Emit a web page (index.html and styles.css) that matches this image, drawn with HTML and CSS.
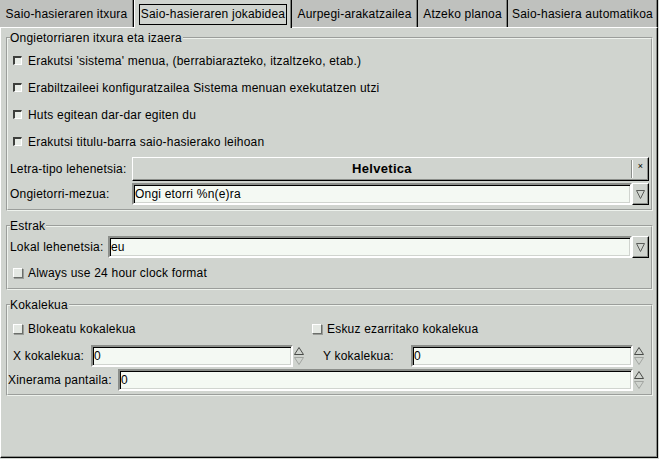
FILE: index.html
```html
<!DOCTYPE html>
<html lang="eu">
<head>
<meta charset="utf-8">
<title>Saio-hasiera</title>
<link rel="stylesheet" href="styles.css">
</head>
<body>
<div class="window">
  <div class="tabs">
    <div class="tab t1">Saio-hasieraren itxura</div>
    <div class="tab t2 active"><span class="focus">Saio-hasieraren jokabidea</span></div>
    <div class="tab t3">Aurpegi-arakatzailea</div>
    <div class="tab t4">Atzeko planoa</div>
    <div class="tab t5">Saio-hasiera automatikoa</div>
  </div>
  <div class="page">
    <fieldset class="frame f1">
      <legend>Ongietorriaren itxura eta izaera</legend>
      <div class="check"><span class="box sunk"></span>Erakutsi 'sistema' menua, (berrabiarazteko, itzaltzeko, etab.)</div>
      <div class="check"><span class="box sunk"></span>Erabiltzaileei konfiguratzailea Sistema menuan exekutatzen utzi</div>
      <div class="check"><span class="box sunk"></span>Huts egitean dar-dar egiten du</div>
      <div class="check"><span class="box sunk"></span>Erakutsi titulu-barra saio-hasierako leihoan</div>
      <div class="field font-field">
        <span class="lbl w-f1">Letra-tipo lehenetsia:</span>
        <div class="fontbtn"><span class="fname">Helvetica</span><span class="fsep"></span><span class="fx">×</span></div>
      </div>
      <div class="field combo-field">
        <span class="lbl w-f1">Ongietorri-mezua:</span>
        <div class="combo">
          <div class="entry">Ongi etorri %n(e)ra</div>
          <div class="drop"><svg width="11" height="11" viewBox="0 0 11 11"><path d="M1.5 1.5 H9.5 L5.5 9.5 Z" fill="none" stroke="#5a5c59" stroke-width="1"/></svg></div>
        </div>
      </div>
    </fieldset>

    <fieldset class="frame f2">
      <legend>Estrak</legend>
      <div class="field combo-field first">
        <span class="lbl w-f2">Lokal lehenetsia:</span>
        <div class="combo">
          <div class="entry">eu</div>
          <div class="drop"><svg width="11" height="11" viewBox="0 0 11 11"><path d="M1.5 1.5 H9.5 L5.5 9.5 Z" fill="none" stroke="#5a5c59" stroke-width="1"/></svg></div>
        </div>
      </div>
      <div class="check short"><span class="box raised"></span>Always use 24 hour clock format</div>
    </fieldset>

    <fieldset class="frame f3">
      <legend>Kokalekua</legend>
      <div class="check short pair">
        <span class="item left"><span class="box raised"></span>Blokeatu kokalekua</span>
        <span class="item"><span class="box raised"></span>Eskuz ezarritako kokalekua</span>
      </div>
      <div class="field spin-row">
        <span class="lbl w-x">X kokalekua:</span>
        <div class="entry w-xe">0</div>
        <span class="spin"><svg width="12" height="22" viewBox="0 0 12 22"><path d="M6 2.5 L10.5 9.5 H1.5 Z" fill="none" stroke="#4a4c49"/><path d="M1.5 12.5 H10.5 L6 19.5 Z" fill="none" stroke="#a2a5a1"/></svg></span>
        <span class="lbl w-y">Y kokalekua:</span>
        <div class="entry w-ye">0</div>
        <span class="spin"><svg width="12" height="22" viewBox="0 0 12 22"><path d="M6 2.5 L10.5 9.5 H1.5 Z" fill="none" stroke="#4a4c49"/><path d="M1.5 12.5 H10.5 L6 19.5 Z" fill="none" stroke="#a2a5a1"/></svg></span>
      </div>
      <div class="field spin-row xin">
        <span class="lbl w-xin">Xinerama pantaila:</span>
        <div class="entry w-xine">0</div>
        <span class="spin"><svg width="12" height="22" viewBox="0 0 12 22"><path d="M6 2.5 L10.5 9.5 H1.5 Z" fill="none" stroke="#4a4c49"/><path d="M1.5 12.5 H10.5 L6 19.5 Z" fill="none" stroke="#a2a5a1"/></svg></span>
      </div>
    </fieldset>
  </div>
</div>
</body>
</html>
```

FILE: styles.css
```css
* { box-sizing: border-box; }

html, body {
  margin: 0;
  padding: 0;
  background: #d0d4cf;
}

body {
  width: 659px;
  height: 459px;
  overflow: hidden;
  font-family: "Liberation Sans", Arial, sans-serif;
  font-size: 12px;
  line-height: 14px;
  letter-spacing: 0.2px;
  color: #000;
}

.window {
  width: 659px;
  height: 459px;
}

/* ---------- tabs ---------- */
.tabs {
  display: flex;
  height: 27px;
}

.tab {
  display: flex;
  align-items: center;
  justify-content: center;
  height: 27px;
  background: #bfc1be;
  border-right: 1px solid #000;
  box-shadow: inset -1px 0 0 #7d807c;
  white-space: nowrap;
}

.t1 { width: 134px; }
.t2 { width: 158px; }
.t3 { width: 126px; }
.t4 { width: 90px; }
.t5 { width: 150px; }

.tab.active {
  background: #d0d4cf;
  border-left: 1px solid #fff;
  height: 28px;
  position: relative;
  z-index: 1;
}

.focus {
  border: 1px solid #000;
  padding: 2px 1px 3px 1px;
}

/* ---------- page ---------- */
.page {
  width: 658px;
  height: 431px;
  border-top: 1px solid #fff;
  border-left: 1px solid #fff;
  border-right: 1px solid #000;
  border-bottom: 1px solid #000;
  box-shadow: inset -1px -1px 0 #8b8e8a;
  padding: 3px 4px 0 5px;
}

/* ---------- frames ---------- */
.frame {
  margin: 0;
  min-width: 0;
  border: 2px groove #eef2ed;
  padding: 2px 2px 4px 2px;
}

.frame legend {
  padding: 0 1px 0 0;
  margin: 0;
  line-height: 14px;
}

.f2 { margin-top: 8px; padding-top: 3px; padding-bottom: 2px; }
.f3 { margin-top: 8px; padding-top: 4px; padding-bottom: 3px; }

/* ---------- check rows ---------- */
.check {
  display: flex;
  align-items: center;
  height: 27px;
  padding-left: 3px;
  white-space: nowrap;
}

.check.short { height: 26px; margin-top: 2px; }
.f3 .check.short { margin-top: 0; }

.box {
  display: inline-block;
  flex: none;
  width: 9px;
  height: 9px;
  margin-right: 6px;
}

.box.sunk {
  background: #e9ede8;
  border-style: solid;
  border-width: 2px 1px 1px 2px;
  border-color: #3d3f3c #fff #fff #3d3f3c;
}

.box.raised {
  width: 10px;
  height: 10px;
  margin-right: 5px;
  background: #e4e8e3;
  border: 1px solid;
  border-color: #fff #6b6e6a #6b6e6a #fff;
  box-shadow: 1px 1px 0 #9a9d99;
}

.pair .item {
  display: flex;
  align-items: center;
}

.pair .item.left { width: 299px; }

/* ---------- fields ---------- */
.field {
  display: flex;
  align-items: center;
  margin-top: 2px;
}

.field.first { margin-top: 0; }

.lbl {
  flex: none;
  white-space: nowrap;
}

.w-f1 { width: 122px; }
.w-f2 { width: 98px; }
.w-x { width: 81px; padding-left: 3px; }
.w-y { width: 106px; padding-left: 18px; }
.w-xin { width: 110px; margin-left: -2px; }

.fontbtn {
  flex: 1;
  height: 24px;
  display: flex;
  align-items: center;
  background: #d0d4cf;
  border: 1px solid;
  border-color: #fff #000 #000 #fff;
  box-shadow: inset -1px -1px 0 #8b8e8a;
}

.fname {
  flex: 1;
  text-align: center;
  font-weight: bold;
  font-size: 13px;
  letter-spacing: 0.3px;
}

.fsep {
  width: 2px;
  height: 18px;
  border-left: 1px solid #8b8e8a;
  border-right: 1px solid #fff;
}

.fx {
  width: 15px;
  text-align: center;
  font-size: 9px;
  line-height: 9px;
  padding-bottom: 6px;
}

.combo {
  flex: 1;
  display: flex;
  height: 22px;
}

.entry {
  height: 22px;
  background: #f4f9f3;
  border: 2px solid;
  border-color: #8b8e8a #fff #fff #8b8e8a;
  box-shadow: inset 1px 1px 0 #000, inset -1px -1px 0 #d0d4cf;
  padding-left: 1px;
  line-height: 18px;
  white-space: nowrap;
  overflow: hidden;
}

.combo .entry { flex: 1; }

.drop {
  width: 17px;
  height: 22px;
  flex: none;
  display: flex;
  align-items: center;
  justify-content: center;
  background: #d0d4cf;
  border: 1px solid;
  border-color: #fff #000 #000 #fff;
  box-shadow: inset -1px -1px 0 #8b8e8a;
}

.spin-row { margin-top: 3px; }
.spin-row.xin { margin-top: 2px; }

.w-xe { width: 202px; }
.w-ye { width: 222px; }
.w-xine { width: 515px; }

.spin {
  flex: none;
  width: 12px;
  height: 22px;
  display: block;
}

.spin svg { display: block; }
```
